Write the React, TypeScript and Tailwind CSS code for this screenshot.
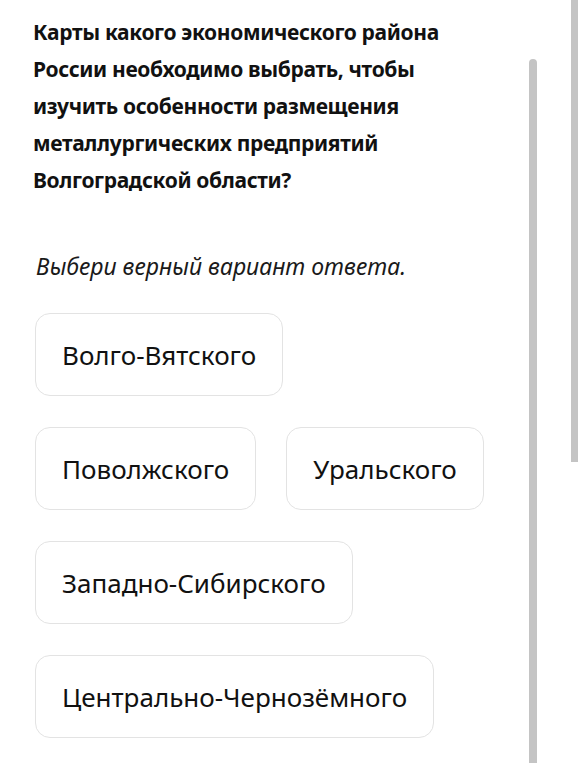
import React from "react";

const options: string[][] = [
  ["Волго-Вятского"],
  ["Поволжского", "Уральского"],
  ["Западно-Сибирского"],
  ["Центрально-Чернозёмного"],
];

export default function App() {
  return (
    <div
      className="relative w-[578px] h-[763px] overflow-hidden bg-white text-[#111111]"
      style={{ fontFamily: '"Noto Sans", "Open Sans", sans-serif' }}
    >
      <div className="pl-[33px] pt-[14px] w-[500px]">
        <h1 className="text-[21px] font-bold leading-[37px] tracking-[-0.35px]">
          Карты какого экономического района России необходимо выбрать, чтобы
          изучить особенности размещения металлургических предприятий
          Волгоградской области?
        </h1>
        <p className="mt-[52px] pl-[3px] text-[23px] italic leading-[30px] text-[#1a1a1a]">
          Выбери верный вариант ответа.
        </p>
        <div className="mt-[32px] pl-[2px] flex flex-col gap-[31px]">
          {options.map((row, i) => (
            <div key={i} className="flex gap-[30px]">
              {row.map((o) => (
                <button
                  key={o}
                  className="h-[83px] px-[26px] rounded-[15px] border border-[#e3e3e3] bg-white text-[26px] leading-[34px] text-[#111111] whitespace-nowrap"
                >
                  {o}
                </button>
              ))}
            </div>
          ))}
        </div>
      </div>
      <div className="absolute left-[529px] top-[59px] bottom-0 w-[8px] rounded-t-[4px] bg-[#c4c4c4]" />
      <div className="absolute left-[571px] top-0 h-[462px] w-[7px] bg-[#c4c4c4]" />
    </div>
  );
}
